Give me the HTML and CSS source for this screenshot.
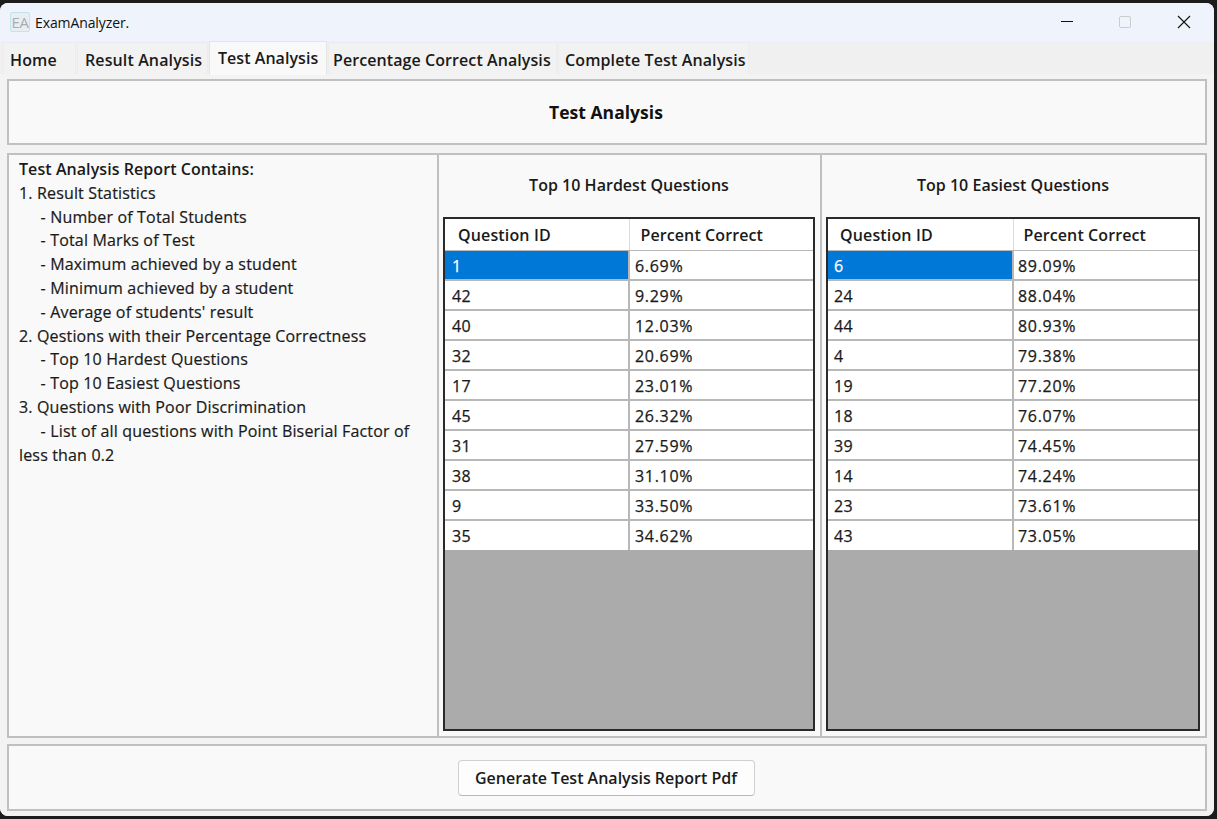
FILE: index.html
```html
<!DOCTYPE html>
<html lang="en">
<head>
    <meta charset="UTF-8">
    <meta name="viewport" content="width=device-width, initial-scale=1.0">
    <title>ExamAnalyzer.</title>
    <link rel="stylesheet" href="styles.css">
</head>
<body>
    <div class="janela">
        <header class="barra-titulo">
            <div class="marca">
                <span class="logo">EA</span>
                <span class="nome-app">ExamAnalyzer.</span>
            </div>
            <div class="controles">
                <svg class="controle" width="58" height="38" viewBox="0 0 58 38"><path d="M23 21.5h12" stroke="#111" stroke-width="1" fill="none"/></svg>
                <svg class="controle" width="58" height="38" viewBox="0 0 58 38"><rect x="23.5" y="16.5" width="11" height="11" rx="1.5" stroke="#ccc" stroke-width="1" fill="none"/></svg>
                <svg class="controle" width="58" height="38" viewBox="0 0 58 38"><path d="M24 16l12 12M36 16l-12 12" stroke="#111" stroke-width="1.1" fill="none"/></svg>
            </div>
        </header>

        <nav class="abas">
            <div class="aba aba-home">Home</div>
            <div class="aba aba-resultado">Result Analysis</div>
            <div class="aba aba-teste ativa">Test Analysis</div>
            <div class="aba aba-percentual">Percentage Correct Analysis</div>
            <div class="aba aba-completa">Complete Test Analysis</div>
        </nav>

        <main class="conteudo">
            <section class="quadro cabecalho">
                <h1>Test Analysis</h1>
            </section>

            <section class="quadro meio">
                <div class="relatorio"><strong>Test Analysis Report Contains:</strong>
1. Result Statistics
     - Number of Total Students
     - Total Marks of Test
     - Maximum achieved by a student
     - Minimum achieved by a student
     - Average of students' result
2. Qestions with their Percentage Correctness
     - Top 10 Hardest Questions
     - Top 10 Easiest Questions
3. Questions with Poor Discrimination
     - List of all questions with Point Biserial Factor of less than 0.2</div>

                <div class="coluna coluna-dificeis">
                    <h2>Top 10 Hardest Questions</h2>
                    <div class="tabela-caixa">
                        <table>
                            <thead>
                                <tr><th class="col-id">Question ID</th><th>Percent Correct</th></tr>
                            </thead>
                            <tbody>
                                <tr><td class="selecionada">1</td><td>6.69%</td></tr>
                                <tr><td>42</td><td>9.29%</td></tr>
                                <tr><td>40</td><td>12.03%</td></tr>
                                <tr><td>32</td><td>20.69%</td></tr>
                                <tr><td>17</td><td>23.01%</td></tr>
                                <tr><td>45</td><td>26.32%</td></tr>
                                <tr><td>31</td><td>27.59%</td></tr>
                                <tr><td>38</td><td>31.10%</td></tr>
                                <tr><td>9</td><td>33.50%</td></tr>
                                <tr><td>35</td><td>34.62%</td></tr>
                            </tbody>
                        </table>
                    </div>
                </div>

                <div class="coluna coluna-faceis">
                    <h2>Top 10 Easiest Questions</h2>
                    <div class="tabela-caixa">
                        <table>
                            <thead>
                                <tr><th class="col-id">Question ID</th><th>Percent Correct</th></tr>
                            </thead>
                            <tbody>
                                <tr><td class="selecionada">6</td><td>89.09%</td></tr>
                                <tr><td>24</td><td>88.04%</td></tr>
                                <tr><td>44</td><td>80.93%</td></tr>
                                <tr><td>4</td><td>79.38%</td></tr>
                                <tr><td>19</td><td>77.20%</td></tr>
                                <tr><td>18</td><td>76.07%</td></tr>
                                <tr><td>39</td><td>74.45%</td></tr>
                                <tr><td>14</td><td>74.24%</td></tr>
                                <tr><td>23</td><td>73.61%</td></tr>
                                <tr><td>43</td><td>73.05%</td></tr>
                            </tbody>
                        </table>
                    </div>
                </div>
            </section>

            <section class="quadro rodape">
                <button type="button">Generate Test Analysis Report Pdf</button>
            </section>
        </main>
    </div>
</body>
</html>
```

FILE: styles.css
```css
/* Variáveis globais */
:root {
    --fonte: 'Open Sans', 'Noto Sans', sans-serif;
    --cor-texto: #1a1a1a;
    --cor-titulo: #eff3fb;
    --cor-janela: #f0f0f0;
    --cor-quadro: #f9f9f9;
    --cor-borda: #c0c0c0;
    --cor-grade: #b8b8b8;
    --cor-selecao: #0078d7;
}

* {
    box-sizing: border-box;
}

html, body {
    height: 100%;
}

body {
    margin: 0;
    padding: 3px 3px 3px 0;
    background-color: #1c1c1c;
    font-family: var(--fonte);
    font-size: 16px;
    color: var(--cor-texto);
    overflow: hidden;
}

.janela {
    height: 813px;
    display: flex;
    flex-direction: column;
    background: var(--cor-janela);
    border-radius: 8px;
    overflow: hidden;
}

/* Barra de título */
.barra-titulo {
    height: 38px;
    flex: none;
    display: flex;
    justify-content: space-between;
    background: var(--cor-titulo);
}

.marca {
    display: flex;
    align-items: center;
    gap: 5px;
    padding-left: 10px;
}

.logo {
    width: 20px;
    height: 20px;
    display: flex;
    align-items: center;
    justify-content: center;
    background: #e9eef2;
    border: 1px solid #c5e2ee;
    border-radius: 2px;
    font-size: 15px;
    line-height: 1;
    letter-spacing: -0.5px;
    color: #a9adb2;
}

.nome-app {
    font-size: 14px;
    letter-spacing: -0.1px;
    color: #111;
}

.controles {
    display: flex;
    padding-right: 2px;
}

.controle {
    display: block;
    margin-top: -3px;
}

/* Abas */
.abas {
    height: 33px;
    flex: none;
    display: flex;
    align-items: flex-end;
    gap: 1px;
    padding-left: 3px;
}

.aba {
    height: 32px;
    padding-top: 5px;
    background: #f2f2f2;
    border: 1px solid #ececec;
    border-bottom: none;
    font-weight: 600;
    font-size: 16px;
    line-height: 24px;
    letter-spacing: 0.12px;
    white-space: nowrap;
}

.aba-home { width: 73px; padding-left: 6px; }
.aba-resultado { width: 131px; padding-left: 7px; }
.aba-teste { width: 118px; padding-left: 8px; }
.aba-percentual { width: 229px; padding-left: 4px; letter-spacing: 0.08px; }
.aba-completa { width: 191px; padding-left: 6px; }

.aba.ativa {
    height: 34px;
    margin-bottom: -1px;
    padding-top: 4px;
    background: var(--cor-quadro);
    border-color: #e4e4e4;
    letter-spacing: 0.05px;
    position: relative;
}

/* Conteúdo */
.conteudo {
    flex: 1;
    display: flex;
    flex-direction: column;
    gap: 6px;
    padding: 5px 7px 5px 7px;
    background: #f3f3f3;
}

.quadro {
    background: var(--cor-quadro);
    border: 2px solid var(--cor-borda);
}

.cabecalho {
    height: 66px;
    margin-bottom: 2px;
    padding-right: 2px;
    display: flex;
    align-items: center;
    justify-content: center;
}

h1 {
    margin: 0;
    font-size: 17.5px;
    font-weight: 700;
    letter-spacing: 0.03px;
    color: #111;
}

.meio {
    height: 585px;
    display: flex;
}

.relatorio {
    width: 430px;
    flex: none;
    padding: 3px 20px 0 10px;
    border-right: 2px solid var(--cor-borda);
    font-size: 16px;
    line-height: 23.8px;
    letter-spacing: 0.16px;
    white-space: pre-wrap;
    -webkit-text-stroke: 0.2px;
}

.relatorio strong {
    font-weight: 600;
    letter-spacing: 0.07px;
    -webkit-text-stroke: 0;
}

.coluna {
    display: flex;
    flex-direction: column;
    padding: 0 5px 5px 4px;
}

.coluna-dificeis {
    width: 383px;
    border-right: 2px solid var(--cor-borda);
}

.coluna-faceis {
    flex: 1;
}

h2 {
    height: 62px;
    flex: none;
    margin: 0;
    padding-bottom: 2px;
    display: flex;
    align-items: center;
    justify-content: center;
    font-size: 16px;
    font-weight: 600;
    letter-spacing: 0.02px;
}

.tabela-caixa {
    flex: 1;
    background: #ababab;
    border: 2px solid #2a2a2a;
}

table {
    width: 100%;
    table-layout: fixed;
    border-collapse: collapse;
    background: #fff;
}

th {
    height: 31px;
    padding: 2px 0 0 10px;
    border-right: 1px solid #dcdcdc;
    border-bottom: 1px solid var(--cor-grade);
    font-weight: 600;
    letter-spacing: 0.1px;
    text-align: left;
}

th.col-id {
    width: 185px;
    padding-left: 12px;
    letter-spacing: 0.15px;
}

th:last-child {
    border-right: none;
}

td {
    height: 30px;
    padding: 2px 0 0 4px;
    border-right: 2px solid var(--cor-grade);
    border-bottom: 2px solid var(--cor-grade);
    letter-spacing: 0.7px;
    -webkit-text-stroke: 0.25px;
}

td:first-child {
    padding-left: 6px;
    letter-spacing: 0.3px;
}

td:last-child {
    border-right: none;
}

tbody tr:last-child td {
    padding-top: 0;
    border-bottom: none;
}

td.selecionada {
    background: var(--cor-selecao);
    color: #fff;
}

/* A tabela da esquerda fica um pixel mais estreita na primeira coluna */
.coluna-dificeis th.col-id {
    width: 184px;
    padding-left: 13px;
}

.coluna-dificeis th {
    padding-left: 11px;
}

.coluna-dificeis td {
    padding-left: 5px;
}

.coluna-dificeis td:first-child {
    padding-left: 7px;
}

/* Rodapé */
.rodape {
    height: 67px;
    display: flex;
    align-items: center;
    justify-content: center;
}

button {
    width: 297px;
    height: 36px;
    margin-top: 1px;
    margin-right: 2px;
    background: #fdfdfd;
    border: 1px solid #d0d0d0;
    border-bottom-color: #b8b8b8;
    border-radius: 4px;
    font-family: var(--fonte);
    font-size: 16px;
    font-weight: 600;
    letter-spacing: 0;
    color: #1a1a1a;
}
```
